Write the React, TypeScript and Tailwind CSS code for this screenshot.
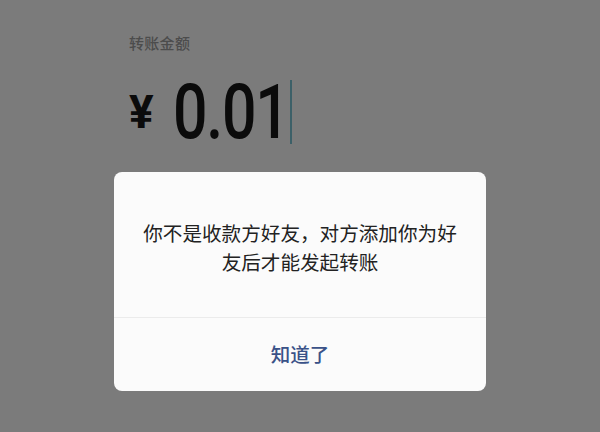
import React from 'react';

const App: React.FC = () => {
  return (
    <div className="w-[600px] h-[432px] overflow-hidden bg-[#7b7b7b] font-['Noto_Sans_CJK_SC',sans-serif]">
      {/* page behind the dialog */}
      <div className="pl-[129px] pt-[33px]">
        <div className="text-[15px] leading-[20px] font-medium text-[#4c4c4c] tracking-[0.02em]">转账金额</div>
        <div className="mt-[26px] flex items-center h-[66px]">
          <span className="font-['Roboto',sans-serif] font-bold text-[46px] leading-none text-[#0b0b0b]">¥</span>
          <span className="ml-[19px] w-[112px] overflow-visible whitespace-nowrap">
            <span className="inline-block origin-left scale-x-[0.8] font-['Roboto',sans-serif] font-medium text-[76px] leading-none text-[#0b0b0b] tracking-[-0.02em]">0.01</span>
          </span>
          <span className="ml-[5px] w-[2px] h-[64px] bg-[#3c6068]" />
        </div>
      </div>

      {/* dialog */}
      <div className="mt-[27px] mx-auto w-[372px] h-[219px] rounded-[8px] bg-[#fbfbfb] flex flex-col overflow-hidden">
        <div className="h-[145px] flex items-center justify-center px-[28px] pt-[4px]">
          <p className="text-[19.6px] leading-[29px] text-[#222] text-center">
            你不是收款方好友，对方添加你为好友后才能发起转账
          </p>
        </div>
        <div className="h-px bg-[#ebebeb]" />
        <div className="flex-1 flex items-center justify-center pb-[2px]">
          <span className="text-[19.5px] text-[#3a5288] font-medium">知道了</span>
        </div>
      </div>
    </div>
  );
};

export default App;
